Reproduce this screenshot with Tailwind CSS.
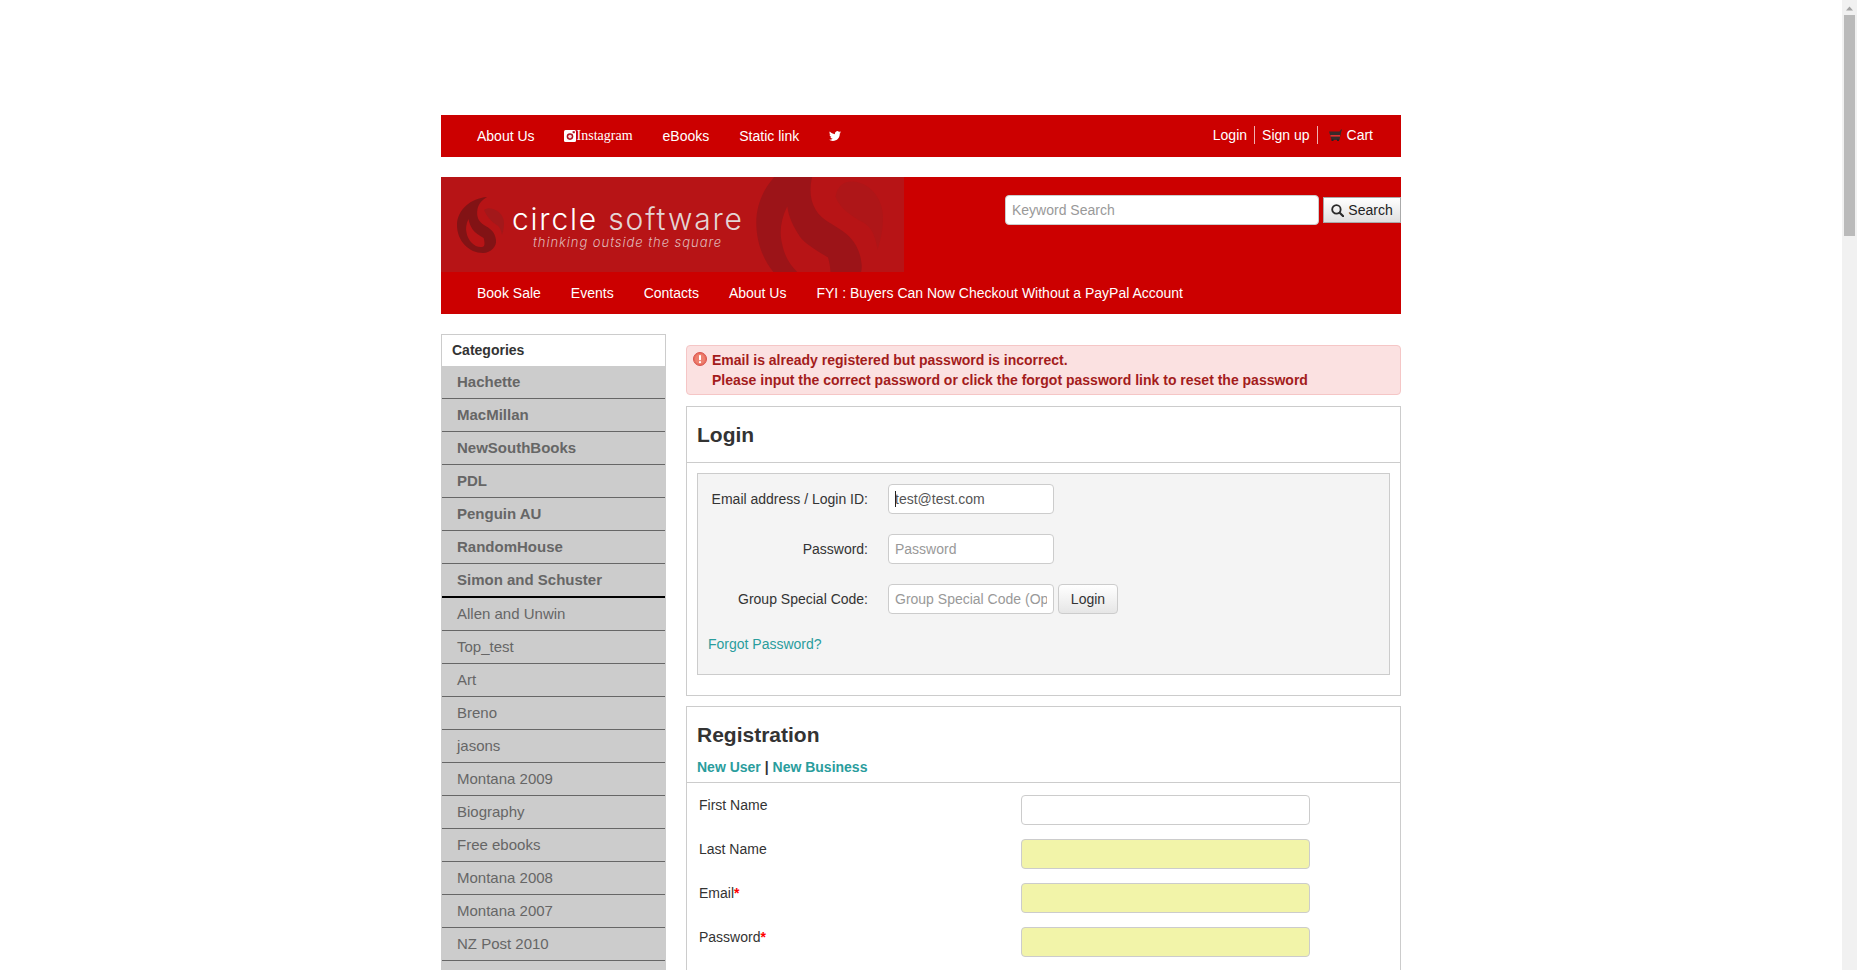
<!DOCTYPE html>
<html lang="en">
  <head>
    <meta charset="UTF-8" />
    <meta name="viewport" content="width=device-width, initial-scale=1.0" />
    <title>Login</title>
    <script src="https://cdn.jsdelivr.net/npm/@tailwindcss/browser@4"></script>
  </head>
  <body class="bg-white overflow-hidden font-['Liberation_Sans',Arial,sans-serif] text-[14px] leading-5 text-[#333]">
    <div class="flex h-[970px] overflow-hidden">
      <div class="flex-1 h-[970px] overflow-hidden">
        <div class="w-[960px] mx-auto pt-[115px]">

          <!-- Top bar -->
          <div class="h-[42px] bg-[#cc0000] flex items-center justify-between text-white pl-[21px] pr-[28px]">
            <ul class="flex items-center">
              <li class="px-[15px]"><a href="#">About Us</a></li>
              <li class="px-[15px]">
                <a href="#" class="flex items-center font-['Liberation_Serif',serif]">
                  <svg class="w-3 h-3 -ml-px mr-px" viewBox="0 0 12 12"><rect width="12" height="12" rx="1.5" fill="#fff" /><circle cx="6" cy="6.6" r="3.3" fill="#b01020" /><circle cx="6" cy="6.6" r="1.8" fill="#f5dfe0" /><rect x="8.6" y="1.2" width="2.2" height="2" fill="#b01020" /></svg>Instagram
                </a>
              </li>
              <li class="px-[15px]"><a href="#">eBooks</a></li>
              <li class="px-[15px]"><a href="#">Static link</a></li>
              <li class="px-[15px]">
                <a href="#" class="block">
                  <svg class="w-3 h-3" viewBox="0 0 24 24" fill="#fff"><path d="M23.953 4.57a10 10 0 01-2.825.775 4.958 4.958 0 002.163-2.723c-.951.555-2.005.959-3.127 1.184a4.92 4.92 0 00-8.384 4.482C7.69 8.095 4.067 6.13 1.64 3.162a4.822 4.822 0 00-.666 2.475c0 1.71.87 3.213 2.188 4.096a4.904 4.904 0 01-2.228-.616v.06a4.923 4.923 0 003.946 4.827 4.996 4.996 0 01-2.212.085 4.936 4.936 0 004.604 3.417 9.867 9.867 0 01-6.102 2.105c-.39 0-.779-.023-1.17-.067a13.995 13.995 0 007.557 2.209c9.053 0 13.998-7.496 13.998-13.985 0-.21 0-.42-.015-.63A9.935 9.935 0 0024 4.59z" /></svg>
                </a>
              </li>
            </ul>
            <ul class="flex items-center -mt-0.5">
              <li class="pr-[7px] border-r border-[#f0b0b0] h-[18px] leading-[18px]"><a href="#">Login</a></li>
              <li class="px-[7px] border-r border-[#f0b0b0] h-[18px] leading-[18px]"><a href="#">Sign up</a></li>
              <li class="pl-[11px] flex items-center gap-[5px]">
                <svg class="w-[13px] h-3" viewBox="0 0 13 12"><path d="M0 2.5h10.5L12 .5h1v1h-.5L10.5 11H2.5L0 2.5z" fill="#3a2a2a" /><rect x="1.4" y="6" width="9.6" height="1.6" fill="#e03030" /><rect x="2.5" y="10.4" width="2" height="1.6" fill="#222" /><rect x="8" y="10.4" width="2" height="1.6" fill="#222" /></svg>
                <a href="#">Cart</a>
              </li>
            </ul>
          </div>

          <!-- Banner -->
          <div class="mt-5 bg-[#cc0000]">
            <div class="flex items-start">
              <div class="relative w-[463px] h-[95px] bg-[#b71416] overflow-hidden shrink-0">
                <svg class="absolute left-[16px] top-[20px] w-[48px] h-[56px]" viewBox="0 0 48 56">
                  <path fill="#821315" fill-rule="evenodd" d="M30 0C14 1 0 13 0 28C0 44 12 56 26 56C34 56 40 49 39 43C38 34 32 31 27 28C22 25 19 20 20.5 12C21.5 7 25 3 30 0ZM11.5 22C9 27 8.5 32 9.6 36C11 44 18 51 25 50C28 50 28 46 26.6 41C22 38 18 36 16 33C13.5 29 12 26 11.5 22Z" />
                  <path fill="#a3181a" d="M27 13C30 11 33 11 36 12C43 14 47 20 47 26C47 31 46 35 45 38C44 33 43 30 39.7 28C35 25 30 20 27 13Z" />
                </svg>
                <svg class="absolute left-[315px] top-[-30px] w-[130px] h-[151px]" viewBox="0 0 48 56">
                  <path fill="#9c1418" fill-rule="evenodd" d="M30 0C14 1 0 13 0 28C0 44 12 56 26 56C34 56 40 49 39 43C38 34 32 31 27 28C22 25 19 20 20.5 12C21.5 7 25 3 30 0ZM11.5 22C9 27 8.5 32 9.6 36C11 44 18 51 25 50C28 50 28 46 26.6 41C22 38 18 36 16 33C13.5 29 12 26 11.5 22Z" />
                  <path fill="#ae1618" d="M29.4 18.5C30 14 33 12.5 36 12.8C43 13.5 47 20 47 26C47 31 46 35 45 38C44 33 43 30 39.7 28C36 26 31 23 29.4 18.5Z" />
                </svg>
                <div class="absolute left-[71px] top-[22px] font-['Inter',sans-serif] font-light text-[30px] leading-[40px] tracking-[1.8px] text-white whitespace-nowrap">circle <span class="text-[#e4d4d4]">software</span></div>
                <div class="absolute left-[92px] top-[56px] font-['Inter',sans-serif] font-light italic text-[13px] leading-[18px] tracking-[0.95px] text-[#e0b8b8] whitespace-nowrap">thinking outside the square</div>
              </div>
              <form class="flex items-center gap-1 ml-[101px] mt-[18px] w-[396px]">
                <input type="text" placeholder="Keyword Search" class="w-[314px] h-[30px] px-[6px] bg-white border border-[#ccc] rounded-[4px] placeholder:text-[#999] outline-none" />
                <button type="button" class="w-[78px] h-[26px] flex items-center justify-center gap-[4px] border border-[#aaa] bg-gradient-to-b from-white to-[#e0e0e0] text-[#222]">
                  <svg class="w-[13px] h-[13px]" viewBox="0 0 12 12" fill="none" stroke="#2a2a2a" stroke-width="1.7"><circle cx="5" cy="5" r="3.9" /><path d="M8 8l3.4 3.4" stroke-linecap="round" stroke-width="2" /></svg>
                  Search
                </button>
              </form>
            </div>
            <ul class="h-[42px] flex items-center text-white pl-[21px]">
              <li class="px-[15px]"><a href="#">Book Sale</a></li>
              <li class="px-[15px]"><a href="#">Events</a></li>
              <li class="px-[15px]"><a href="#">Contacts</a></li>
              <li class="px-[15px]"><a href="#">About Us</a></li>
              <li class="px-[15px]"><a href="#">FYI : Buyers Can Now Checkout Without a PayPal Account</a></li>
            </ul>
          </div>

          <div class="flex items-start gap-5 mt-5">
            <!-- Categories -->
            <aside class="w-[225px] shrink-0 border border-[#ccc] bg-[#ccc] text-[#666] text-[15px]">
              <div class="h-[31px] bg-white text-[#333] font-bold text-[14px] leading-[30px] pl-[10px]">Categories</div>
              <ul class="font-bold">
                <li class="h-[33px] leading-[32px] pl-[15px] border-b border-[#666]"><a href="#">Hachette</a></li>
                <li class="h-[33px] leading-[32px] pl-[15px] border-b border-[#666]"><a href="#">MacMillan</a></li>
                <li class="h-[33px] leading-[32px] pl-[15px] border-b border-[#666]"><a href="#">NewSouthBooks</a></li>
                <li class="h-[33px] leading-[32px] pl-[15px] border-b border-[#666]"><a href="#">PDL</a></li>
                <li class="h-[33px] leading-[32px] pl-[15px] border-b border-[#666]"><a href="#">Penguin AU</a></li>
                <li class="h-[33px] leading-[32px] pl-[15px] border-b border-[#666]"><a href="#">RandomHouse</a></li>
                <li class="h-[34px] leading-[32px] pl-[15px] border-b-2 border-black"><a href="#">Simon and Schuster</a></li>
              </ul>
              <ul>
                <li class="h-[33px] leading-[32px] pl-[15px] border-b border-[#666]"><a href="#">Allen and Unwin</a></li>
                <li class="h-[33px] leading-[32px] pl-[15px] border-b border-[#666]"><a href="#">Top_test</a></li>
                <li class="h-[33px] leading-[32px] pl-[15px] border-b border-[#666]"><a href="#">Art</a></li>
                <li class="h-[33px] leading-[32px] pl-[15px] border-b border-[#666]"><a href="#">Breno</a></li>
                <li class="h-[33px] leading-[32px] pl-[15px] border-b border-[#666]"><a href="#">jasons</a></li>
                <li class="h-[33px] leading-[32px] pl-[15px] border-b border-[#666]"><a href="#">Montana 2009</a></li>
                <li class="h-[33px] leading-[32px] pl-[15px] border-b border-[#666]"><a href="#">Biography</a></li>
                <li class="h-[33px] leading-[32px] pl-[15px] border-b border-[#666]"><a href="#">Free ebooks</a></li>
                <li class="h-[33px] leading-[32px] pl-[15px] border-b border-[#666]"><a href="#">Montana 2008</a></li>
                <li class="h-[33px] leading-[32px] pl-[15px] border-b border-[#666]"><a href="#">Montana 2007</a></li>
                <li class="h-[33px] leading-[32px] pl-[15px] border-b border-[#666]"><a href="#">NZ Post 2010</a></li>
                <li class="h-[33px]"></li>
              </ul>
            </aside>

            <main class="flex-1 pt-[11px]">
              <!-- Alert -->
              <div class="h-[50px] border border-[#f5c6c6] bg-[#fbe1e1] rounded-[4px] text-[#a31c1c] font-bold flex pl-[6px] pt-[4px]">
                <svg class="w-[14px] h-[14px] mt-[2px] shrink-0" viewBox="0 0 14 14"><circle cx="7" cy="7" r="6.5" fill="#e8705f" stroke="#d9534f" /><circle cx="7" cy="7" r="5" fill="#ee8070" /><rect x="6" y="3" width="2" height="5.2" rx="0.8" fill="#fff" /><circle cx="7" cy="10.2" r="1.1" fill="#fff" /></svg>
                <p class="pl-[5px]">Email is already registered but password is incorrect.<br />Please input the correct password or click the forgot password link to reset the password</p>
              </div>

              <!-- Login -->
              <section class="mt-[11px] border border-[#ccc] pb-5">
                <h2 class="h-[56px] border-b border-[#ccc] pl-[10px] pt-[15px] text-[21px] leading-[26px] font-bold text-[#333]">Login</h2>
                <form class="mx-[10px] mt-[10px] h-[202px] border border-[#ccc] bg-[#f4f4f4] pt-[10px] pl-[10px]">
                  <div class="flex items-center gap-5 mb-5">
                    <label class="w-[160px] text-right">Email address / Login ID:</label>
                    <div class="relative">
                      <input type="text" value="test@test.com" class="block w-[166px] h-[30px] px-[6px] bg-white border border-[#ccc] rounded-[4px] text-[#555] outline-none" />
                      <span class="absolute left-[7px] top-[7px] w-px h-4 bg-[#222]"></span>
                    </div>
                  </div>
                  <div class="flex items-center gap-5 mb-5">
                    <label class="w-[160px] text-right">Password:</label>
                    <input type="password" placeholder="Password" class="w-[166px] h-[30px] px-[6px] bg-white border border-[#ccc] rounded-[4px] placeholder:text-[#999] outline-none" />
                  </div>
                  <div class="flex items-center gap-5 mb-5">
                    <label class="w-[160px] text-right">Group Special Code:</label>
                    <div class="flex items-center gap-1">
                      <input type="text" placeholder="Group Special Code (Optional)" class="w-[166px] h-[30px] px-[6px] bg-white border border-[#ccc] rounded-[4px] placeholder:text-[#999] outline-none" />
                      <button type="button" class="w-[60px] h-[30px] border border-[#ccc] rounded-[4px] bg-gradient-to-b from-white to-[#e6e6e6] text-[#333]">Login</button>
                    </div>
                  </div>
                  <a href="#" class="text-[#2a9d9d]">Forgot Password?</a>
                </form>
              </section>

              <!-- Registration -->
              <section class="mt-[10px] border border-[#ccc] h-[300px]">
                <div class="h-[76px] border-b border-[#ccc] pl-[10px] pt-[15px]">
                  <h2 class="text-[21px] leading-[26px] font-bold text-[#333]">Registration</h2>
                  <p class="mt-[9px] font-bold"><a href="#" class="text-[#2a9d9d]">New User</a> | <a href="#" class="text-[#2a9d9d]">New Business</a></p>
                </div>
                <form class="pt-3 pl-3 flex flex-col gap-[14px]">
                  <div class="flex">
                    <label class="w-[322px]">First Name</label>
                    <input type="text" class="w-[289px] h-[30px] bg-white border border-[#ccc] rounded-[4px] outline-none" />
                  </div>
                  <div class="flex">
                    <label class="w-[322px]">Last Name</label>
                    <input type="text" class="w-[289px] h-[30px] bg-[#f2f4a9] border border-[#ccc] rounded-[4px] outline-none" />
                  </div>
                  <div class="flex">
                    <label class="w-[322px]">Email<span class="text-[#ff0000] font-bold">*</span></label>
                    <input type="text" class="w-[289px] h-[30px] bg-[#f2f4a9] border border-[#ccc] rounded-[4px] outline-none" />
                  </div>
                  <div class="flex">
                    <label class="w-[322px]">Password<span class="text-[#ff0000] font-bold">*</span></label>
                    <input type="password" class="w-[289px] h-[30px] bg-[#f2f4a9] border border-[#ccc] rounded-[4px] outline-none" />
                  </div>
                </form>
              </section>
            </main>
          </div>
        </div>
      </div>

      <!-- Scrollbar -->
      <div class="w-[15px] h-[970px] bg-[#f1f1f1] shrink-0 flex flex-col items-center">
        <svg class="w-[15px] h-[15px] shrink-0" viewBox="0 0 15 15"><path d="M4 10.5L7.5 6.5L11 10.5Z" fill="#a3a3a3" /></svg>
        <div class="w-[11px] h-[221px] bg-[#bababa]"></div>
      </div>
    </div>
  </body>
</html>
